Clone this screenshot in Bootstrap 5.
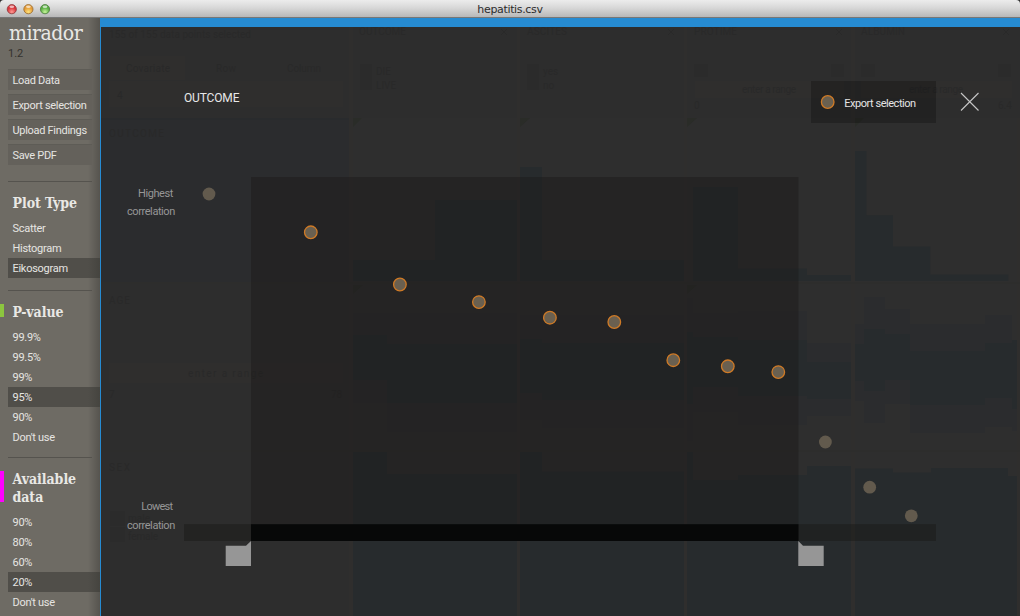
<!DOCTYPE html>
<html lang="en">
<head>
<meta charset="utf-8">
<meta name="viewport" content="width=device-width, initial-scale=1">
<title>hepatitis.csv</title>
<link href="https://cdn.jsdelivr.net/npm/bootstrap@5.3.0/dist/css/bootstrap.min.css" rel="stylesheet">
<script src="https://cdn.jsdelivr.net/npm/bootstrap@5.3.0/dist/js/bootstrap.bundle.min.js"></script>
<style>
body{font-family:Roboto,"Liberation Sans",sans-serif;font-size:11px;background:#2e2e2e;color:#e6e5e2}
.titlebar{height:18px;background:linear-gradient(#ececec,#d8d8d8 45%,#b8b8b8);border-bottom:1px solid #777;border-radius:4px 4px 0 0}
.titlebar svg{left:0;top:0}
.titlebar span{font:11px/19px "DejaVu Sans",sans-serif;color:#2c2c2c;letter-spacing:-.34px}
.side{width:100px;background:linear-gradient(90deg,transparent 88px,rgba(0,0,0,.22)),#6e6b64;padding-left:8px}
.brand{font:21px/26px "DejaVu Serif Condensed","DejaVu Serif",serif;font-stretch:condensed;color:#e9e8e5;height:27px;margin-top:2px;letter-spacing:-.5px;padding-left:1px}
.version{line-height:13px;height:22px;color:#34332f}
.tool{width:84px;height:20.5px;margin-bottom:4.5px;padding:0 0 0 4.5px;line-height:22px;background:#64615b;border-top:1px solid #5e5c56;color:inherit;font-size:11px;letter-spacing:-.3px}
.rule{width:84px;height:1px;background:#55534e}
.side h2{font:bold 14px/18px "DejaVu Serif Condensed","DejaVu Serif",serif;font-stretch:condensed;padding-left:4.5px;margin:0 0 6px;color:#e9e8e5;letter-spacing:-.05px}
.mk{left:-8px;top:1px;width:4px}
.opt{height:20px;line-height:22px;padding-left:4.5px;letter-spacing:-.28px}
.opt.on{background:linear-gradient(90deg,#504e49 80px,#45443f)}
.stage{border-left:1px solid #268bd2;border-top:9px solid #268bd2;background:#2e2e2e}
.ghost text{fill:#292929;font-size:10px}
.blue{fill:#272b2d}
.half{fill:#2b2c2e}
.dot{fill:#625a4d}
.pick{fill:#6a6050;stroke:#cf7a26;stroke-width:1.3}
.lab{fill:#969696;font-size:11px}
</style>
</head>
<body class="vh-100 overflow-hidden d-flex flex-column">
<header class="titlebar flex-shrink-0 position-relative d-flex justify-content-center">
  <svg class="position-absolute" width="60" height="18">
    <defs>
      <radialGradient id="r" cy=".8"><stop offset="0" stop-color="#ff9b94"/><stop offset="1" stop-color="#d8343a"/></radialGradient>
      <radialGradient id="y" cy=".8"><stop offset="0" stop-color="#ffe47c"/><stop offset="1" stop-color="#e49b36"/></radialGradient>
      <radialGradient id="g" cy=".8"><stop offset="0" stop-color="#c7f59b"/><stop offset="1" stop-color="#58ad42"/></radialGradient>
    </defs>
    <circle cx="11.8" cy="9.2" r="4.6" fill="url(#r)" stroke="#8d3a3c" stroke-width=".8"/>
    <circle cx="28.4" cy="9.2" r="4.6" fill="url(#y)" stroke="#96692f" stroke-width=".8"/>
    <circle cx="45" cy="9.2" r="4.6" fill="url(#g)" stroke="#4b7a3c" stroke-width=".8"/>
    <g fill="#fff" opacity=".65"><ellipse cx="11.8" cy="6.7" rx="2.4" ry="1.3"/><ellipse cx="28.4" cy="6.7" rx="2.4" ry="1.3"/><ellipse cx="45" cy="6.7" rx="2.4" ry="1.3"/></g>
  </svg>
  <span>hepatitis.csv</span>
</header>
<div class="d-flex flex-grow-1 overflow-hidden">
  <nav class="side flex-shrink-0 d-flex flex-column">
    <div class="brand">mirador</div>
    <div class="version">1.2</div>
    <button class="tool border-start-0 border-end-0 border-bottom-0 text-start text-nowrap">Load Data</button>
    <button class="tool border-start-0 border-end-0 border-bottom-0 text-start text-nowrap">Export selection</button>
    <button class="tool border-start-0 border-end-0 border-bottom-0 text-start text-nowrap">Upload Findings</button>
    <button class="tool border-start-0 border-end-0 border-bottom-0 text-start text-nowrap">Save PDF</button>
    <div class="rule" style="margin-top:11.5px;margin-bottom:12px"></div>
    <h2>Plot Type</h2>
    <div class="opt">Scatter</div><div class="opt">Histogram</div><div class="opt on">Eikosogram</div>
    <div class="rule" style="margin-top:12px;margin-bottom:12px"></div>
    <h2 class="position-relative"><i class="mk position-absolute" style="height:13px;background:#8cc63f"></i>P-value</h2>
    <div class="opt">99.9%</div><div class="opt">99.5%</div><div class="opt">99%</div><div class="opt on">95%</div><div class="opt">90%</div><div class="opt">Don't use</div>
    <div class="rule" style="margin-top:10px;margin-bottom:12px"></div>
    <h2 class="position-relative"><i class="mk position-absolute" style="height:31px;background:#f0f"></i>Available data</h2>
    <div class="opt">90%</div><div class="opt">80%</div><div class="opt">60%</div><div class="opt on">20%</div><div class="opt">Don't use</div>
  </nav>
  <main class="stage flex-grow-1 overflow-hidden">
    <svg class="d-block" width="919" height="589" viewBox="101 27 919 589">
      <!-- dimmed matrix of plots behind the panel -->
      <rect x="101" y="27" width="919" height="91" fill="#2d2d2d"/>
      <path class="half" d="M101 118h248v164H101z"/>
      <path fill="#2d2d2d" d="M101 282h248v334H101z"/>
      <path fill="#292b2d" d="M101 118h248v2H101z"/>
      <path fill="#2f2e2d" d="M349 27h4v589h-4zM517 27h3v589h-3zM684 27h3v589h-3zM851 27h4v589h-4zM1017 118h3v498h-3z"/>
      <path fill="#2d2d2c" d="M101 282h919v2H101zM101 450h919v2H101z"/>
      <path class="blue" d="M353 281V260H435V200H517V281zM520 281V167H542V260H684V281zM693 281V187H738V268.500H807V275H851V281zM855 281V151H866.500V215.300H893V246.500H930.300V274.500H1008.300V281z"/>
      <path class="half" d="M353 313H517V432H387V403H353zM520 315H684V428H542V420H520zM687 298H693V313H738V311H807V343H851V416H807V425H738V412H693V441H687zM855 324H864V297H885V309H910V324H985V315H1012V340H1017V431H1012V427H985V433H910V404H885V423H864V401H855z"/>
      <path class="blue" d="M353 335H387V344H517V403H387V380H353zM520 339H542V343H684V400H542V393H520zM687 332H693V337H738V340H807V362H851V399H807V396H738V387H693V404H687zM855 344H864V329H885V334H910V351H985V343H1012V340H1017V409H1012V398H985V405H910V380H885V391H864V381H855z"/>
      <path class="blue" d="M353 616V452H387V474H517V616zM520 616V452H542V471.500H684V616zM687 616V452H693V480H738V475H807V466H851V616zM855 616V468.500H893V472.500H931V468H1008V476H1017V616z"/>
      <path fill="#2a2c28" d="M353 118h9l-9 9zM520 118h10l-10 9zM687 118h10l-10 9zM855 118h9l-9 9zM353 285h10l-10 9zM687 285h10l-10 9z"/>
      <path fill="#2f2e2d" d="M110 56h75v24h-75zM109 81h234v26H109zM695 81h149v17H695zM861 81h151v17H861zM109 363h234v20H109z"/>
      <path fill="#2b2b2b" d="M360 64h12v26h-12zM527 64h12v26h-12zM694 64h14v13h-14zM831 64h13v13h-13zM861 64h14v13h-14zM998 64h13v13h-13zM110 511h15v15h-15zM110 527h15v15h-15z"/>
      <g class="ghost">
        <text x="109" y="38" textLength="142">155 of 155 data points selected</text>
        <text x="126" y="72" textLength="44">Covariate</text><text x="216" y="72" textLength="20">Row</text><text x="287" y="72" textLength="34">Column</text>
        <text x="117" y="99">4</text><text x="109" y="137" textLength="55">OUTCOME</text>
        <text x="359" y="35" textLength="47">OUTCOME</text><text x="527" y="35" textLength="40">ASCITES</text><text x="694" y="35" textLength="43">PROTIME</text><text x="861" y="35" textLength="44">ALBUMIN</text>
        <text x="376" y="75">DIE</text><text x="376" y="89">LIVE</text><text x="543" y="75">yes</text><text x="543" y="89">no</text>
        <text x="742" y="93" textLength="54">enter a range</text><text x="909" y="93" textLength="54">enter a range</text>
        <text x="694" y="109">0</text><text x="998" y="109">6.4</text>
        <text x="109" y="304" textLength="21">AGE</text><text x="188" y="377" textLength="75">enter a range</text><text x="109" y="398">7</text><text x="331" y="398">78</text>
        <text x="109" y="471" textLength="21">SEX</text><text x="128" y="522" textLength="22">male</text><text x="128" y="540" textLength="30">female</text>
        <path d="M501 29l6 6m0-6l-6 6M668 29l6 6m0-6l-6 6M836 29l6 6m0-6l-6 6M1003 29l6 6m0-6l-6 6" stroke="#292929"/>
      </g>
      <!-- selected range and its slider -->
      <rect x="251" y="177" width="547.500" height="347.200" fill="#1a1918" opacity=".42"/>
      <rect x="184" y="524.200" width="752" height="16.800" fill="#1a1918" opacity=".5"/>
      <rect x="251" y="524.200" width="547.500" height="16.800" fill="#020303" opacity=".84"/>
      <path fill="#969696" d="M251 541V566H225.700V545.700H246zM798.300 541V566H823.700V545.700H803z"/>
      <!-- correlations -->
      <g class="dot"><circle cx="209" cy="194" r="6.400"/><circle cx="825.400" cy="442" r="6.400"/><circle cx="869.700" cy="487.200" r="6.400"/><circle cx="911.300" cy="515.800" r="6.400"/></g>
      <g class="pick"><circle cx="310.800" cy="232.300" r="6.300"/><circle cx="399.900" cy="284.500" r="6.300"/><circle cx="478.900" cy="302.100" r="6.300"/><circle cx="549.900" cy="317.700" r="6.300"/><circle cx="614.300" cy="322" r="6.300"/><circle cx="673.300" cy="360.200" r="6.300"/><circle cx="727.800" cy="366.300" r="6.300"/><circle cx="778.300" cy="372.100" r="6.300"/></g>
      <text x="184" y="102" fill="#e8e8e8" font-size="12" textLength="55.500">OUTCOME</text>
      <g class="lab"><text x="138" y="197" textLength="35.300">Highest</text><text x="127" y="215" textLength="48.300">correlation</text><text x="141.300" y="510" textLength="31.800">Lowest</text><text x="127" y="528.500" textLength="48.300">correlation</text></g>
      <!-- export button and close -->
      <rect x="811" y="81" width="125" height="42" opacity=".23"/>
      <circle class="pick" cx="827.700" cy="102" r="6.300"/>
      <text x="844.300" y="107" fill="#e4e4e4" font-size="11" textLength="71.800">Export selection</text>
      <path d="M961 93l17.500 17.500M978.500 93L961 110.500" stroke="#c6c6c6" stroke-width="1.100"/>
    </svg>
  </main>
</div>
</body>
</html>
